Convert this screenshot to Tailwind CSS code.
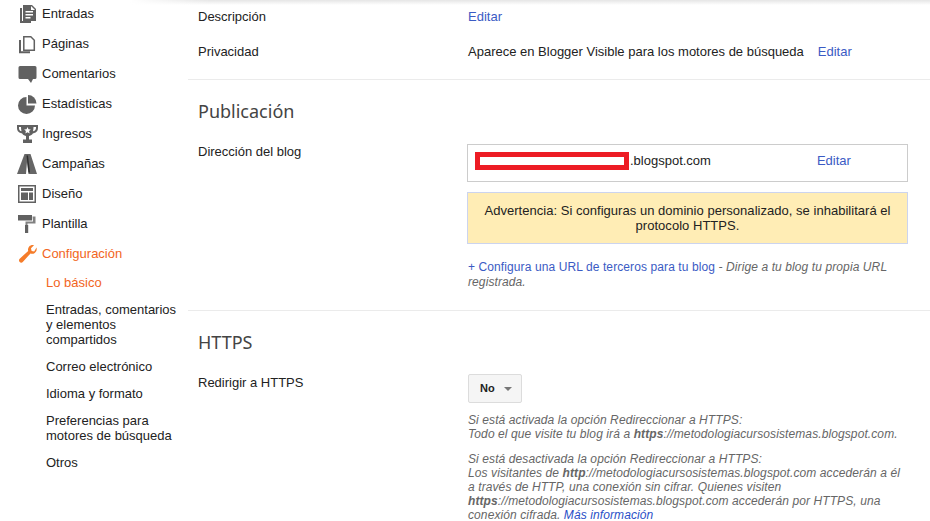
<!DOCTYPE html>
<html lang="en">
<head>
  <meta charset="UTF-8">
  <title>Configuración - Blogger</title>
  <script src="https://cdn.jsdelivr.net/npm/@tailwindcss/browser@4"></script>
</head>
<body class="relative bg-white h-[521px] w-[930px] overflow-hidden font-['Liberation_Sans',Arial,sans-serif] text-[13px] text-[#222]">
  <!-- top shadow -->
  <div class="absolute top-0 left-[130px] right-0 h-[5px] bg-linear-to-b from-black/10 to-transparent">
    <div class="w-[80px] h-full bg-linear-to-r from-white to-transparent"></div>
  </div>
  <div class="flex">
    <!-- sidebar -->
    <nav class="w-[188px] shrink-0 -mt-[1px]">
      <a class="flex items-center h-[30px] pl-[17px]">
        <svg class="w-[20px] h-[20px] mr-[5px]" viewBox="0 0 20 20" fill="#616161"><path d="M3 4h2v13h9v2H3z"/><path fill-rule="evenodd" d="M6 1h9l4 4v12H6zM8.500 7v1.500H16V7zm0 3v1.500H16V10zm0 3v1.500h5V13zM14 2v4h4z"/></svg>
        <span>Entradas</span>
      </a>
      <a class="flex items-center h-[30px] pl-[17px]">
        <svg class="w-[20px] h-[20px] mr-[5px]" viewBox="0 0 20 20" fill="none" stroke="#616161" stroke-width="1.500"><path d="M6.800 2.800h7l3.500 3.500v9.900H6.800z"/><path d="M3 6v12.200h10" stroke-width="2"/></svg>
        <span>Páginas</span>
      </a>
      <a class="flex items-center h-[30px] pl-[17px]">
        <svg class="w-[20px] h-[20px] mr-[5px]" viewBox="0 0 20 20" fill="#616161"><path d="M3 2h15a1.500 1.500 0 0 1 1.500 1.500v10A1.500 1.500 0 0 1 18 15h-2l-2 4-3-4H3a1.500 1.500 0 0 1-1.500-1.500v-10A1.500 1.500 0 0 1 3 2z"/></svg>
        <span>Comentarios</span>
      </a>
      <a class="flex items-center h-[30px] pl-[17px]">
        <svg class="w-[20px] h-[20px] mr-[5px]" viewBox="0 0 20 20" fill="#616161"><path d="M9.500 3v8.500H18A8.500 8.500 0 1 1 9.500 3z"/><path d="M11 1a8.500 8.500 0 0 1 8.500 8.500H11z"/></svg>
        <span>Estadísticas</span>
      </a>
      <a class="flex items-center h-[30px] pl-[17px]">
        <svg class="w-[21px] h-[20px] mr-[4px]" viewBox="0 0 21 20" fill="#616161"><path fill-rule="evenodd" d="M0 1h21v3c0 3.500-2.500 5-5 5.300-.8 1.400-2 2.300-4 2.700v3.500h3V19H6v-3.500h3V12c-2-.4-3.200-1.300-4-2.700C2.500 9 0 7.500 0 4zM2 3v1c0 1.800 1 3 2.500 3.300C4.200 6 4 4.500 4 3zm17 0h-2.500c0 1.500-.2 3-.5 4.300C17.500 7 19 5.800 19 4z"/><path fill="#fff" d="M10.500 3l1 2.300 2.400.2-1.800 1.600.5 2.400-2.100-1.300-2.100 1.300.5-2.400-1.800-1.600 2.400-.2z"/></svg>
        <span>Ingresos</span>
      </a>
      <a class="flex items-center h-[30px] pl-[17px]">
        <svg class="w-[21px] h-[20px] mr-[4px]" viewBox="0 0 21 20"><path fill="#666" d="M7.500 0H13.500L20 20H11.500L10 8 9 20H0z"/><path fill="#2e2e2e" d="M9.500 1.500h1.500l2 17h-1.500L10 6z"/></svg>
        <span>Campañas</span>
      </a>
      <a class="flex items-center h-[30px] pl-[18px]">
        <svg class="w-[18px] h-[18px] mr-[6px]" viewBox="0 0 18 18" fill="#616161"><path fill-rule="evenodd" d="M0 0h18v18H0zM1.500 1.500v15h15v-15z"/><path d="M3 3h12v3H3zM3 7.500h7V15H3zM11 7.500h4V15h-4z"/></svg>
        <span>Diseño</span>
      </a>
      <a class="flex items-center h-[30px] pl-[18px]">
        <svg class="w-[19px] h-[20px] mr-[5px]" viewBox="0 0 19 20" fill="#616161"><path d="M0 1h14v5.500H0z"/><path d="M14.500 2.500h3v7h-8V12h-2V7.500h7.500z" opacity=".8"/><path d="M7 11h3.200v8H7z"/></svg>
        <span>Plantilla</span>
      </a>
      <a class="flex items-center h-[30px] pl-[18px] text-[#f26522]">
        <svg class="w-[19px] h-[20px] mr-[5px]" viewBox="0 0 19 20" fill="#f57c2a"><path d="M18.500 3.500c.6 2.300-.1 4.300-1.700 5.400-1.400 1-3 1-4.300.5L5 17.800c-1 1.100-2.400 1.100-3.300.2s-1-2.300 0-3.300l8.500-7.800c-.5-1.600-.1-3.200 1-4.400 1.200-1.300 3-1.800 4.800-1.300l-3 3 .6 2.700 2.600.6z"/></svg>
        <span>Configuración</span>
      </a>
      <ul class="pl-[46px] pr-[6px] leading-[15px]">
        <li class="pt-[6px] pb-[6px] text-[#f26522]">Lo básico</li>
        <li class="pt-[6px] pb-[6px]">Entradas, comentarios y elementos compartidos</li>
        <li class="pt-[6px] pb-[6px]">Correo electrónico</li>
        <li class="pt-[6px] pb-[6px]">Idioma y formato</li>
        <li class="pt-[6px] pb-[6px]">Preferencias para motores de búsqueda</li>
        <li class="pt-[6px] pb-[6px]">Otros</li>
      </ul>
    </nav>

    <!-- main -->
    <main class="flex-1 min-w-0">
      <section class="h-[80px] border-b border-[#ebebeb] pl-[10px] pt-[9px]">
        <div class="flex h-[15px] leading-[15px]">
          <div class="w-[270px]">Descripción</div>
          <a class="text-[#3b5bc4]">Editar</a>
        </div>
        <div class="flex mt-[20px] leading-[15px]">
          <div class="w-[270px]">Privacidad</div>
          <div>Aparece en Blogger Visible para los motores de búsqueda</div>
          <a class="ml-[14px] text-[#3b5bc4]">Editar</a>
        </div>
      </section>

      <section class="h-[231px] border-b border-[#ebebeb] pl-[10px] pt-[20px]">
        <h2 class="font-['Noto_Sans',sans-serif] text-[18px] leading-[23px] text-[#444]">Publicación</h2>
        <div class="flex mt-[21px]">
          <div class="w-[269px] leading-[15px]">Dirección del blog</div>
          <div class="w-[441px]">
            <div class="flex items-center h-[38px] border border-[#ccc] pl-[7px] pb-[4px]">
              <span class="w-[154px] h-[18px] border-[5px] border-[#ed1c24] bg-white"></span>
              <span class="ml-[1px]">.blogspot.com</span>
              <a class="ml-[106px] text-[#3b5bc4]">Editar</a>
            </div>
            <div class="mt-[10px] h-[52px] border border-[#ccd4ee] bg-[#ffedb5] flex items-center justify-center text-center leading-[15px] px-[10px] tracking-[0.03px]">Advertencia: Si configuras un dominio personalizado, se inhabilitará el protocolo HTTPS.</div>
            <p class="mt-[16px] pl-[1px] text-[12px] leading-[15px] tracking-[0.1px] text-[#666] italic"><a class="not-italic text-[#3b5bc4]">+ Configura una URL de terceros para tu blog</a> - Dirige a tu blog tu propia URL registrada.</p>
          </div>
        </div>
      </section>

      <section class="pl-[10px] pt-[20px]">
        <h2 class="font-['Noto_Sans',sans-serif] text-[18px] leading-[23px] text-[#444]">HTTPS</h2>
        <div class="flex mt-[21px]">
          <div class="w-[270px] leading-[15px]">Redirigir a HTTPS</div>
          <div class="w-[440px]">
            <div class="-mt-[1px] flex items-center w-[54px] h-[29px] border border-[#dcdcdc] rounded-[2px] bg-[#f5f5f5] pl-[11px] text-[11px] font-bold">
              <span>No</span>
              <span class="ml-[9px] w-0 h-0 border-x-[4px] border-x-transparent border-t-[4px] border-t-[#777]"></span>
            </div>
            <div class="mt-[10px] text-[12px] leading-[14px] tracking-[0.1px] text-[#666] italic">
              <p>Si está activada la opción Redireccionar a HTTPS:<br>Todo el que visite tu blog irá a <b>https</b>://metodologiacursosistemas.blogspot.com.</p>
              <p class="mt-[11px]">Si está desactivada la opción Redireccionar a HTTPS:<br>Los visitantes de <b>http</b>://metodologiacursosistemas.blogspot.com accederán a él a través de HTTP, una conexión sin cifrar. Quienes visiten <b>https</b>://metodologiacursosistemas.blogspot.com accederán por HTTPS, una conexión cifrada. <a class="text-[#2a4fc7]">Más información</a></p>
            </div>
          </div>
        </div>
      </section>
    </main>
  </div>
</body>
</html>
